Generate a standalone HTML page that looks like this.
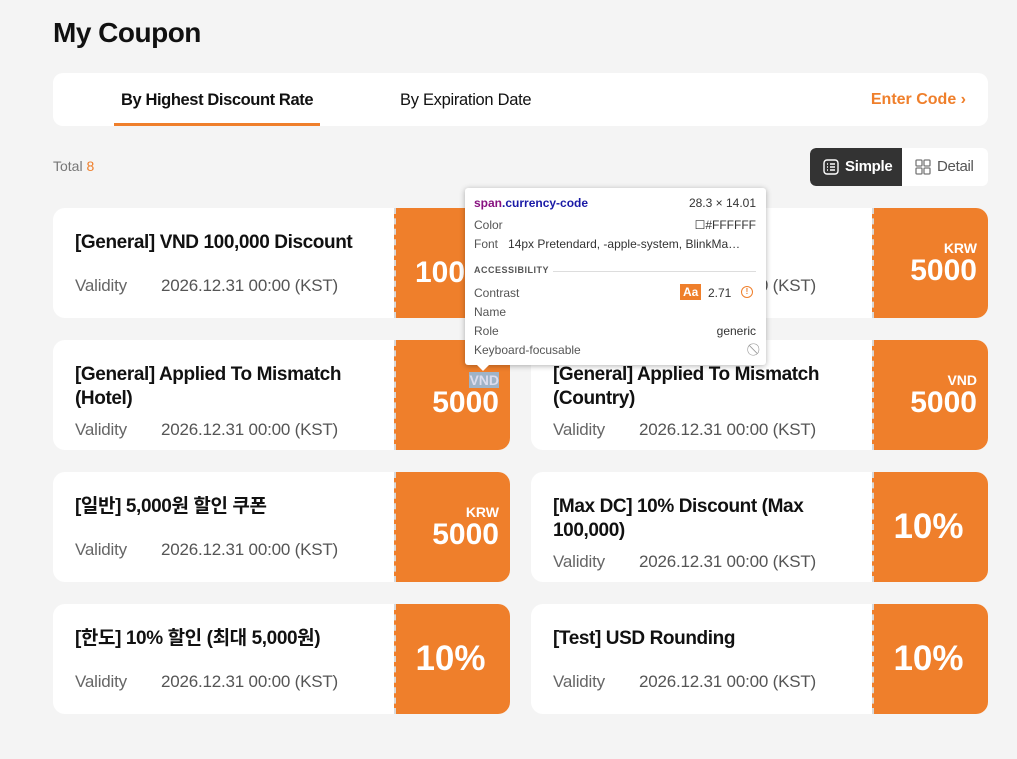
<!DOCTYPE html>
<html><head><meta charset="utf-8"><style>
*{box-sizing:border-box;margin:0;padding:0}
body{width:1017px;height:759px;background:#f4f4f4;font-family:"Liberation Sans","Noto Sans CJK KR",sans-serif;position:relative;overflow:hidden;color:#111}
h1{position:absolute;left:53px;top:17px;font-size:28px;font-weight:bold;letter-spacing:-0.5px}
.tabs{position:absolute;left:53px;top:73px;width:935px;height:53px;background:#fff;border-radius:10px}
.tab{position:absolute;top:18px;font-size:16.5px;letter-spacing:-0.3px}
.t1{left:68px;font-weight:bold;letter-spacing:-0.4px}
.t1:after{content:"";position:absolute;left:-7px;right:-7px;top:32px;height:3px;background:#ef7f2b}
.t2{left:347px}
.code{position:absolute;right:22px;top:18px;color:#ef7f2b;font-weight:bold;font-size:16px}
.total{position:absolute;left:53px;top:158px;font-size:14px;color:#777}
.total b{color:#ef7f2b;font-weight:normal}
.seg{position:absolute;left:810px;top:148px;width:178px;height:38px;background:#fff;border-radius:6px;overflow:hidden;font-size:15px;letter-spacing:-0.3px}
.seg .s{position:absolute;left:0;top:0;width:92px;height:38px;background:#333;color:#fff;font-weight:bold;padding:10px 0 0 35px;border-radius:6px 0 0 6px}
.seg .d{position:absolute;left:127px;top:10px;color:#555}
.card{position:absolute;width:457px;height:110px;background:#fff;border-radius:12px}
.stub{position:absolute;right:0;top:0;width:116px;height:110px;background:#ef7f2b;border-radius:0 12px 12px 0;border-left:2px dashed #d9d9d9;color:#fff;text-align:right;padding-right:11px;font-weight:bold;overflow:hidden}
.stub .cur{font-size:14px;display:block;margin-top:32px}
.stub .v{font-size:30px;display:block;line-height:30px}
.stub .p{font-size:35px;display:block;margin-top:35px;text-align:center;padding-left:6px}
.title{position:absolute;left:22px;top:23px;width:300px;font-size:19px;font-weight:bold;line-height:24px;letter-spacing:-0.4px}
.val{position:absolute;left:22px;top:68px;font-size:17px;color:#666;letter-spacing:-0.2px}
.two .val{top:80px}
.val span{margin-left:34px;color:#555}
.tip{position:absolute;left:465px;top:188px;width:301px;height:177px;background:#fff;border-radius:3px;box-shadow:0 1px 6px rgba(0,0,0,.3);font-size:12px;color:#555}
.tip div{position:absolute}
</style></head><body>
<h1>My Coupon</h1>
<div class="tabs"><div class="tab t1">By Highest Discount Rate</div><div class="tab t2">By Expiration Date</div><div class="code">Enter Code ›</div></div>
<div class="total">Total <b>8</b></div>
<div class="seg"><div class="s">Simple</div>
<svg style="position:absolute;left:13px;top:11px" width="16" height="16" viewBox="0 0 16 16" fill="none" stroke="#fff" stroke-width="1.4"><rect x="1" y="1" width="14" height="14" rx="3"/><path d="M4 5h1M7 5h5M4 8h1M7 8h5M4 11h1M7 11h5"/></svg>
<svg style="position:absolute;left:105px;top:11px" width="16" height="16" viewBox="0 0 16 16" fill="none" stroke="#777" stroke-width="1.3"><rect x="1" y="1" width="6" height="6" rx="1"/><rect x="9" y="1" width="6" height="6" rx="1"/><rect x="1" y="9" width="6" height="6" rx="1"/><rect x="9" y="9" width="6" height="6" rx="1"/></svg>
<div class="d">Detail</div></div>

<div class="card" style="left:53px;top:208px"><div class="title">[General] VND 100,000 Discount</div><div class="val">Validity<span>2026.12.31 00:00 (KST)</span></div><div class="stub" style="text-align:left;padding-left:19px"><span class="v" style="margin-top:50px;white-space:nowrap">100,000</span></div></div>
<div class="card" style="left:531px;top:208px"><div class="title">[General] KRW 5000</div><div class="val">Validity<span>2026.12.31 00:00 (KST)</span></div><div class="stub"><span class="cur">KRW</span><span class="v">5000</span></div></div>
<div class="card two" style="left:53px;top:340px"><div class="title">[General] Applied To Mismatch (Hotel)</div><div class="val">Validity<span>2026.12.31 00:00 (KST)</span></div><div class="stub"><span class="cur"><span style="background:#9fb3c8;color:#dde">VND</span></span><span class="v">5000</span></div></div>
<div class="card two" style="left:531px;top:340px"><div class="title">[General] Applied To Mismatch (Country)</div><div class="val">Validity<span>2026.12.31 00:00 (KST)</span></div><div class="stub"><span class="cur">VND</span><span class="v">5000</span></div></div>
<div class="card" style="left:53px;top:472px"><div class="title">[일반] 5,000원 할인 쿠폰</div><div class="val">Validity<span>2026.12.31 00:00 (KST)</span></div><div class="stub"><span class="cur">KRW</span><span class="v">5000</span></div></div>
<div class="card two" style="left:531px;top:472px"><div class="title">[Max DC] 10% Discount (Max 100,000)</div><div class="val">Validity<span>2026.12.31 00:00 (KST)</span></div><div class="stub"><span class="p">10%</span></div></div>
<div class="card" style="left:53px;top:604px"><div class="title">[한도] 10% 할인 (최대 5,000원)</div><div class="val">Validity<span>2026.12.31 00:00 (KST)</span></div><div class="stub"><span class="p">10%</span></div></div>
<div class="card" style="left:531px;top:604px"><div class="title">[Test] USD Rounding</div><div class="val">Validity<span>2026.12.31 00:00 (KST)</span></div><div class="stub"><span class="p">10%</span></div></div>

<div class="tip">
<div style="left:9px;top:8px;font-weight:bold;color:#881280">span<span style="color:#1a1aa6">.currency-code</span></div>
<div style="right:10px;top:8px;color:#333">28.3 × 14.01</div>
<div style="left:9px;top:30px">Color</div><div style="right:10px;top:30px;color:#333">☐#FFFFFF</div>
<div style="left:9px;top:49px">Font&nbsp;&nbsp; <span style="color:#333">14px Pretendard, -apple-system, BlinkMa…</span></div>
<div style="left:9px;top:77px;font-size:9px;font-weight:bold;letter-spacing:.5px">ACCESSIBILITY</div>
<div style="left:88px;top:83px;width:203px;height:1px;background:#ddd"></div>
<div style="left:9px;top:98px">Contrast</div>
<div style="left:215px;top:96px;background:#ef7f2b;color:#fff;padding:1px 3px;font-weight:bold">Aa</div>
<div style="left:243px;top:98px;color:#333">2.71</div>
<div style="left:276px;top:98px;width:12px;height:12px;border:1.5px solid #ef7f2b;border-radius:50%;color:#ef7f2b;font-size:8px;text-align:center;line-height:9px;font-weight:bold">!</div>
<div style="left:9px;top:117px">Name</div>
<div style="left:9px;top:136px">Role</div><div style="right:10px;top:136px;color:#333">generic</div>
<div style="left:9px;top:155px">Keyboard-focusable</div><div style="right:10px;top:154px;color:#999">⃠</div>
<div style="left:11px;top:176px;width:0;height:0;border-left:7px solid transparent;border-right:7px solid transparent;border-top:7px solid #fff"></div>
</div>
</body></html>
